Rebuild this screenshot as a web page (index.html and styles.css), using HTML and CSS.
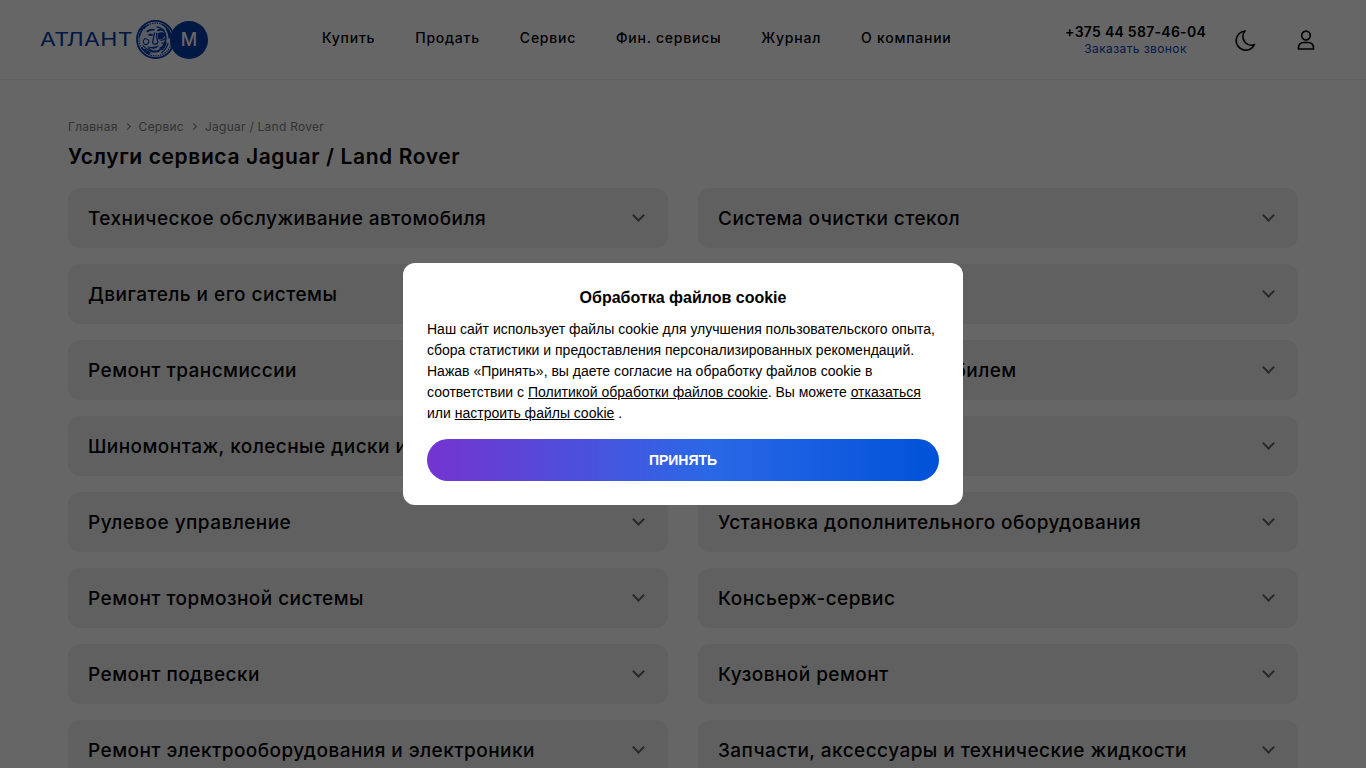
FILE: index.html
```html
<!DOCTYPE html>
<html lang="ru">
<head>
<meta charset="utf-8">
<title>Услуги сервиса Jaguar / Land Rover</title>
<link rel="stylesheet" href="styles.css">
</head>
<body>
<header class="site-header">
  <a class="logo" href="#">
    <span class="logo-word"><span class="logo-word-inner">АТЛАНТ</span></span>
    <svg class="logo-coin" viewBox="0 0 40 40" width="39" height="39" aria-hidden="true">
      <circle cx="20" cy="20" r="19" fill="#dfe7fa" stroke="#003ca8" stroke-width="1.8"/>
      <circle cx="20" cy="20" r="16.800" fill="none" stroke="#003ca8" stroke-width="1.2" stroke-dasharray="1.500 1"/>
      <path d="M26 4q8 4 10 13M29 6q5 5 6 13M31 9q3 5 3 10M33 24q-2 6-7 10M31 23q-1 5-5 8M7 9q-3 4-4 9M10 6q-3 2-5 5M13 5q-3 1-5 4M6 28q3 5 8 7M9 30q3 3 6 4" fill="none" stroke="#003ca8" stroke-width="1.300"/>
      <path d="M21 7q7 1 9 7t-2 12q-3 6-8 6t-8-4" fill="none" stroke="#003ca8" stroke-width="1.400"/>
      <path d="M11 12q4-3 8-2M22 11q3-2 7 0" fill="none" stroke="#003ca8" stroke-width="1.800"/>
      <path d="M12 15q3-2 6 0q-3 3-6 0z" fill="#003ca8"/>
      <path d="M22 14q4-3 8 0q0 6-7 6z" fill="#003ca8"/>
      <path d="M19 13q-1 6-2 10q1 3 5 1q1-1 0-3q-1-4-1-8" fill="none" stroke="#003ca8" stroke-width="1.300"/>
      <path d="M12 27q5 2 12-1q-3 4-7 3.500t-5-2.500z" fill="#003ca8"/>
      <path d="M9 19q-3 3 0 6q3 1 4-2t-4-4z" fill="none" stroke="#003ca8" stroke-width="1.100"/>
      <path d="M25 21q4 0 6-3M26 24q3 0 5-2M7 26q5 6 12 7M15 31q4 3 9 1M24 29q3-1 6-4" fill="none" stroke="#003ca8" stroke-width="1.100"/>
    </svg>
    <span class="logo-m">М</span>
  </a>
  <nav class="main-nav">
    <a href="#">Купить</a>
    <a href="#">Продать</a>
    <a href="#">Сервис</a>
    <a href="#">Фин. сервисы</a>
    <a href="#">Журнал</a>
    <a href="#">О компании</a>
  </nav>
  <div class="contact">
    <a class="phone" href="#">+375 44 587-46-04</a>
    <a class="callback" href="#">Заказать звонок</a>
  </div>
  <button class="icon-btn theme-btn" aria-label="Тема">
    <svg viewBox="0 0 24 24" width="24" height="24" fill="none" stroke="#000" stroke-width="1.7" stroke-linecap="round" stroke-linejoin="round"><path d="M11 3a9.600 9.600 0 1 0 9.500 13.500a8.500 8.500 0 0 1-9.500-13.500z"/></svg>
  </button>
  <button class="icon-btn user-btn" aria-label="Профиль">
    <svg viewBox="0 0 24 24" width="24" height="24" fill="none" stroke="#000" stroke-width="1.7" stroke-linejoin="round"><circle cx="12" cy="7.500" r="4.300"/><path d="M4.500 21v-1.500a5 5 0 0 1 5-5h5a5 5 0 0 1 5 5v1.500z"/></svg>
  </button>
</header>

<main class="content">
  <nav class="breadcrumbs">
    <a href="#">Главная</a><span class="crumb-sep"></span>
    <a href="#">Сервис</a><span class="crumb-sep"></span>
    <span>Jaguar / Land Rover</span>
  </nav>
  <h1 class="page-title">Услуги сервиса Jaguar / Land Rover</h1>
  <div class="services">
    <div class="service"><span>Техническое обслуживание автомобиля</span><i class="chev"></i></div>
    <div class="service"><span>Система очистки стекол</span><i class="chev"></i></div>
    <div class="service"><span>Двигатель и его системы</span><i class="chev"></i></div>
    <div class="service"><span>Выхлопная система</span><i class="chev"></i></div>
    <div class="service"><span>Ремонт трансмиссии</span><i class="chev"></i></div>
    <div class="service"><span>Мойка и уход за автомобилем</span><i class="chev"></i></div>
    <div class="service"><span>Шиномонтаж, колесные диски и шины</span><i class="chev"></i></div>
    <div class="service"><span>Система отопления</span><i class="chev"></i></div>
    <div class="service"><span>Рулевое управление</span><i class="chev"></i></div>
    <div class="service"><span>Установка дополнительного оборудования</span><i class="chev"></i></div>
    <div class="service"><span>Ремонт тормозной системы</span><i class="chev"></i></div>
    <div class="service"><span>Консьерж-сервис</span><i class="chev"></i></div>
    <div class="service"><span>Ремонт подвески</span><i class="chev"></i></div>
    <div class="service"><span>Кузовной ремонт</span><i class="chev"></i></div>
    <div class="service"><span>Ремонт электрооборудования и электроники</span><i class="chev"></i></div>
    <div class="service"><span>Запчасти, аксессуары и технические жидкости</span><i class="chev"></i></div>
  </div>
</main>

<div class="overlay">
  <section class="cookie">
    <h2 class="cookie-title">Обработка файлов cookie</h2>
    <p class="cookie-text">Наш сайт использует файлы cookie для улучшения пользовательского опыта, сбора статистики и предоставления персонализированных рекомендаций. Нажав «Принять», вы даете согласие на обработку файлов cookie в соответствии с <a href="#">Политикой обработки файлов cookie</a>. Вы можете <a href="#">отказаться</a> или <a href="#">настроить файлы cookie</a> .</p>
    <button class="cookie-accept">Принять</button>
  </section>
</div>
</body>
</html>
```
FILE: styles.css
```css
* { box-sizing: border-box; }
html, body { height: 100%; overflow: hidden; }
body {
  margin: 0;
  background: #fff;
  color: #000;
  font-family: Inter, "Liberation Sans", sans-serif;
}
a { color: inherit; text-decoration: none; }

.site-header {
  display: flex;
  align-items: center;
  height: 80px;
  padding: 0 48px 0 40px;
  border-bottom: 1px solid #f0f0f0;
}
.logo { display: flex; align-items: center; width: 282px; }
.logo-word {
  display: block;
  width: 96px;
  color: #003ca8;
  font-size: 18px;
  font-weight: 400;
  white-space: nowrap;
}
.logo-word-inner {
  display: inline-block;
  letter-spacing: 0.3px;
  transform: scaleX(1.28);
  transform-origin: left center;
}
.logo-coin { display: block; flex: none; }
.logo-m {
  display: flex;
  flex: none;
  align-items: center;
  justify-content: center;
  width: 38px;
  height: 38px;
  margin-left: -5px;
  border-radius: 50%;
  background: #003ca8;
  color: #fff;
  font-size: 18px;
  font-weight: 500;
}
.main-nav {
  display: flex;
  gap: 40px;
  margin-top: -4px;
  font-size: 14px;
  font-weight: 500;
  letter-spacing: 0.75px;
  white-space: nowrap;
}
.contact {
  display: flex;
  flex-direction: column;
  align-items: center;
  margin-left: auto;
  margin-right: 28px;
}
.phone { font-size: 14px; font-weight: 600; line-height: 18px; letter-spacing: 0.27px; }
.callback { font-size: 12px; line-height: 15px; color: #0a44b4; letter-spacing: 0.4px; }
.icon-btn {
  display: flex;
  align-items: center;
  justify-content: center;
  width: 24px;
  height: 24px;
  padding: 0;
  border: 0;
  background: none;
}
.user-btn { margin-left: 36px; }

.content { padding: 39px 68px 0; }
.breadcrumbs {
  display: flex;
  align-items: center;
  height: 14px;
  font-size: 12px;
  letter-spacing: 0.25px;
  color: #808080;
}
.crumb-sep {
  width: 5px;
  height: 5px;
  margin: 0 9px 0 7px;
  border-top: 1px solid #808080;
  border-right: 1px solid #808080;
  transform: rotate(45deg);
}
.page-title {
  margin: 11px 0 18px;
  font-size: 21px;
  line-height: 26px;
  font-weight: 600;
  letter-spacing: 0.6px;
}
.services {
  display: grid;
  grid-template-columns: 600px 600px;
  gap: 16px 30px;
}
.service {
  display: flex;
  align-items: center;
  justify-content: space-between;
  height: 60px;
  padding: 0 24px 0 20px;
  border-radius: 12px;
  background: #f0f0f0;
  font-size: 19px;
  font-weight: 500;
  letter-spacing: 0.45px;
  white-space: nowrap;
}
.chev {
  width: 9px;
  height: 9px;
  margin: -5px 1px 0 0;
  border-right: 2px solid #666;
  border-bottom: 2px solid #666;
  transform: rotate(45deg);
}

.overlay {
  position: fixed;
  inset: 0;
  display: flex;
  align-items: center;
  justify-content: center;
  background: rgba(0, 0, 0, 0.6);
}
.cookie {
  width: 560px;
  padding: 24px;
  border-radius: 12px;
  background: #fff;
  font-family: "Liberation Sans", Arial, sans-serif;
}
.cookie-title {
  margin: 0 0 10px;
  font-size: 16px;
  line-height: 22px;
  font-weight: 700;
  text-align: center;
}
.cookie-text {
  margin: 0 0 15px;
  font-size: 14px;
  line-height: 21px;
}
.cookie-text a { text-decoration: underline; }
.cookie-accept {
  display: block;
  width: 100%;
  height: 42px;
  border: 0;
  border-radius: 21px;
  background: linear-gradient(90deg, #7434d0, #2a68e6 55%, #0052d9);
  color: #fff;
  font-family: inherit;
  font-size: 14px;
  font-weight: 700;
  text-transform: uppercase;
}
```
